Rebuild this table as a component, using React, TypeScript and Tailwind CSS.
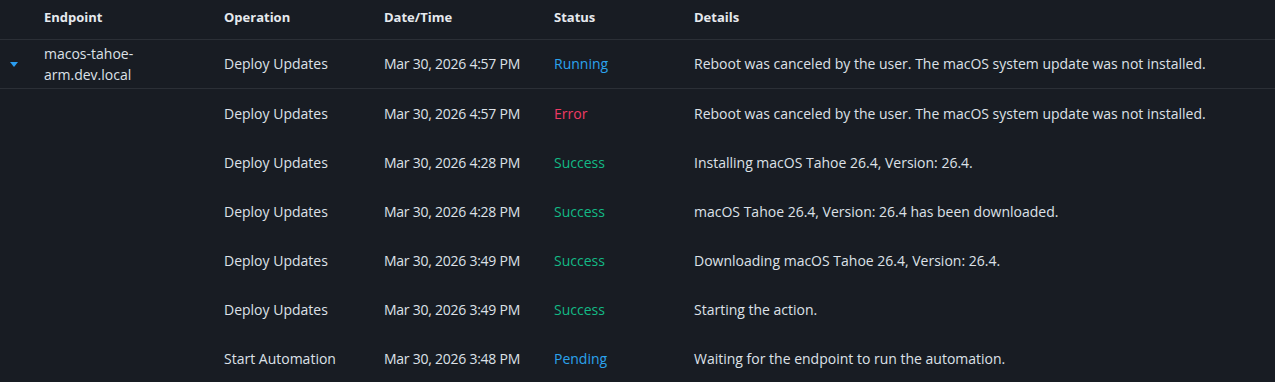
import React from "react";

type Row = { op: string; date: string; status: "Running" | "Error" | "Success" | "Pending"; details: string };

const rows: Row[] = [
  { op: "Deploy Updates", date: "Mar 30, 2026 4:57 PM", status: "Error", details: "Reboot was canceled by the user. The macOS system update was not installed." },
  { op: "Deploy Updates", date: "Mar 30, 2026 4:28 PM", status: "Success", details: "Installing macOS Tahoe 26.4, Version: 26.4." },
  { op: "Deploy Updates", date: "Mar 30, 2026 4:28 PM", status: "Success", details: "macOS Tahoe 26.4, Version: 26.4 has been downloaded." },
  { op: "Deploy Updates", date: "Mar 30, 2026 3:49 PM", status: "Success", details: "Downloading macOS Tahoe 26.4, Version: 26.4." },
  { op: "Deploy Updates", date: "Mar 30, 2026 3:49 PM", status: "Success", details: "Starting the action." },
  { op: "Start Automation", date: "Mar 30, 2026 3:48 PM", status: "Pending", details: "Waiting for the endpoint to run the automation." },
];

const statusClass: Record<Row["status"], string> = {
  Running: "text-[#2ba3ee]",
  Pending: "text-[#2ba3ee]",
  Error: "text-[#ee3a64]",
  Success: "text-[#13b985]",
};

const grid = "grid grid-cols-[44px_180px_160px_170px_140px_1fr] items-center";

export default function App() {
  return (
    <div
      className="w-[1275px] h-[382px] overflow-hidden bg-[#181c23] text-[#dde1e8] text-[14px]"
      style={{ fontFamily: '"Open Sans", "Noto Sans", sans-serif' }}
    >
      <div className={`${grid} h-[40px] pb-[4px] border-b border-[#2b2f36] font-bold text-[13px] text-[#e6e9ee]`}>
        <div />
        <div>Endpoint</div>
        <div>Operation</div>
        <div>Date/Time</div>
        <div>Status</div>
        <div>Details</div>
      </div>
      <div className={`${grid} h-[49px] pb-[2px] border-b border-[#2b2f36]`}>
        <div className="flex justify-center pr-[16px] pt-[2px]">
          <svg width="8" height="5" viewBox="0 0 8 5">
            <path d="M0 0 L8 0 L4 5 Z" fill="#2a9df0" />
          </svg>
        </div>
        <div className="max-w-[112px] leading-[21px] pt-[1px]">macos-tahoe-arm.dev.local</div>
        <div>Deploy Updates</div>
        <div className="tracking-[-0.25px]">Mar 30, 2026 4:57 PM</div>
        <div className={statusClass.Running}>Running</div>
        <div>Reboot was canceled by the user. The macOS system update was not installed.</div>
      </div>
      {rows.map((r, i) => (
        <div key={i} className={`${grid} h-[49px] pb-[1px]`}>
          <div />
          <div />
          <div>{r.op}</div>
          <div className="tracking-[-0.25px]">{r.date}</div>
          <div className={statusClass[r.status]}>{r.status}</div>
          <div>{r.details}</div>
        </div>
      ))}
    </div>
  );
}
